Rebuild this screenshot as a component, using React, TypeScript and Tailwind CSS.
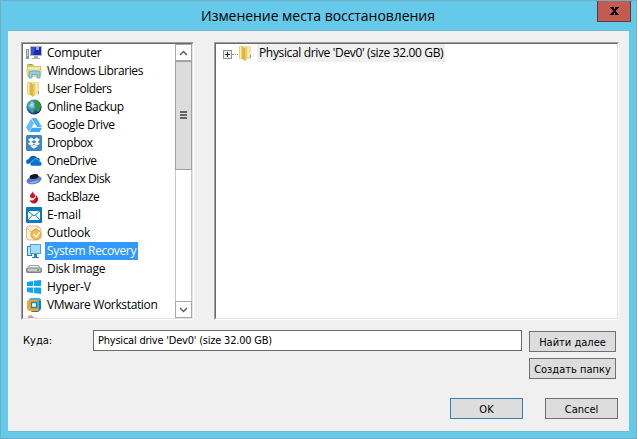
import React from 'react';

const FolderIcon = () => (
  <svg width="16" height="16" viewBox="0 0 16 16">
    <path d="M1 1h5v13H2l-1-1z" fill="#ecd277" />
    <path d="M6 1h7v12l-5 2H6z" fill="#f6e294" />
    <path d="M4 2l3 1v13l-3-2z" fill="#dcb748" />
    <path d="M7 3l2-1v12l-2 2z" fill="#e9cb66" />
    <path d="M2 2h1v11H2zM10 2h1v10h-1z" fill="#fbf0bd" />
    <path d="M12 10h1v3h-1z" fill="#59a9dc" />
  </svg>
);

const ComputerIcon = () => (
  <svg width="16" height="16" viewBox="0 0 16 16">
    <path d="M0 4h3v10H0z" fill="#8c9299" />
    <path d="M1 5h1v6H1z" fill="#d2d6da" />
    <path d="M1 11h1v2H1z" fill="#36d04c" />
    <path d="M4 1h12v10H4z" fill="#b8b9bd" />
    <path d="M5 2h10v8H5z" fill="#1b27b5" />
    <path d="M5 2h5l-3 8H5z" fill="#3d51d4" />
    <path d="M10 2h3v3h-3z" fill="#8fa4ef" />
    <path d="M8 11h4v2h2v1H6v-1h2z" fill="#aaaeb3" />
  </svg>
);

const LibraryIcon = () => (
  <svg width="16" height="16" viewBox="0 0 16 16">
    <path d="M1 1h6l1 2h7v11H1z" fill="#dfbf60" />
    <path d="M2 4h12v9H2z" fill="#f7e7a5" />
    <path d="M3 1h3v1H3z" fill="#57bd49" />
    <path d="M0 7h16l-1 7H1z" fill="#f1d77e" />
    <path d="M3 15V9.500Q3 8 5 8h7q2 0 2 1.500V15h-3v-3.500H6V15z" fill="#8bd0ee" stroke="#3f91b9" strokeWidth=".6" />
  </svg>
);

const GlobeIcon = () => (
  <svg width="16" height="16" viewBox="0 0 16 16">
    <defs>
      <radialGradient id="sea" cx=".35" cy=".35" r=".7">
        <stop offset="0" stopColor="#c3e8fa" />
        <stop offset=".5" stopColor="#2c80cf" />
        <stop offset="1" stopColor="#0c246b" />
      </radialGradient>
    </defs>
    <circle cx="8" cy="8" r="7.600" fill="url(#sea)" />
    <path d="M9 1l4 2 2 4-1 4-2 2-2-2V8L8 7l1-3-2-1z" fill="#2f9a35" />
    <path d="M1.500 4 4 2l1 2-3 3zM4 10l4 1-1 3-2-1z" fill="#4bad3b" />
  </svg>
);

const DriveIcon = () => (
  <svg width="16" height="16" viewBox="0 0 16 16">
    <path d="M5.300 1h5.200L16 10h-5z" fill="#4cb3fa" />
    <path d="M5 1.700 8 6.500 3 15 0 10.500z" fill="#61bdfb" />
    <path d="M6 10.800h10L13.500 15H3.500z" fill="#3ba8f5" />
  </svg>
);

const DropboxIcon = () => (
  <svg width="16" height="16" viewBox="0 0 16 16">
    <rect width="16" height="16" rx="1.500" fill="#3f86c5" />
    <path d="M5.300 2.500 8 4.600l2.700-2.100L14 4.800l-2.300 2 2.300 2-3.200 2L8 8.700l-2.800 2.100-3.200-2 2.300-2-2.300-2z" fill="#fff" />
    <path d="M8 5.200 10.600 6.800 8 8.400 5.400 6.800z" fill="#3f86c5" />
    <path d="M4.500 11.300 8 9.700l3.500 1.600L8 13.700z" fill="#fff" />
  </svg>
);

const OneDriveIcon = () => (
  <svg width="16" height="16" viewBox="0 0 16 16">
    <path d="M1 11c-2-3 0-5 2-5 1-4 7-4 8-1 2-1 3 1 3 3z" fill="#0863b9" />
    <path d="M5 13c-2-3 0-5 2-5 1-3 5-3 6 0 3 0 4 5 1 5z" fill="#0873d0" stroke="#fff" strokeWidth=".4" />
  </svg>
);

const YandexIcon = () => (
  <svg width="16" height="16" viewBox="0 0 16 16">
    <ellipse cx="8" cy="9" rx="7.600" ry="4" transform="rotate(-14 8 9)" fill="#5a7bc8" />
    <ellipse cx="8" cy="5.500" rx="4.500" ry="2.400" transform="rotate(-10 8 5.500)" fill="#151719" />
    <path d="M2 10.500q6 2 11.500-2.500-3 4.500-8 4.500z" fill="#9db5ea" />
  </svg>
);

const FlameIcon = () => (
  <svg width="16" height="16" viewBox="0 0 16 16">
    <path d="M7 2c0 3 3 3 2 6-1 2-5 2-5-1 0-2 2-2 3-5z" fill="#d2142c" />
    <path d="M10 6c2 2 3 5 1 7-3 3-7 1-7-2 2 1 5 1 6-5z" fill="#c71028" />
    <path d="M5 9q3 2 5-1" stroke="#fff" strokeWidth=".5" fill="none" />
  </svg>
);

const MailIcon = () => (
  <svg width="16" height="16" viewBox="0 0 16 16">
    <rect width="16" height="16" rx="1" fill="#0879bd" />
    <path d="M2 4h12v9H2z" fill="#fff" />
    <path d="M2 4l6 5 6-5M2 13l4.500-5M14 13 9.500 8" stroke="#1986c1" strokeWidth="1" fill="none" />
  </svg>
);

const OutlookIcon = () => (
  <svg width="16" height="16" viewBox="0 0 16 16">
    <path d="M.5 3 2 1h10l3 3v9l-3 2H2L.5 13z" fill="#fbeed8" stroke="#dda778" strokeWidth=".8" />
    <path d="M1 3l4 4 8-5" fill="none" stroke="#e0af86" strokeWidth=".8" />
    <circle cx="10" cy="9.500" r="5" fill="#f3b942" stroke="#cd9c50" strokeWidth=".8" />
    <path d="M7.500 9l2.500 3 3.500-4.500" fill="none" stroke="#fffbe8" strokeWidth="1.700" />
  </svg>
);

const RecoveryIcon = () => (
  <svg width="16" height="16" viewBox="0 0 16 16" shapeRendering="crispEdges">
    <path d="M1.500 3.500h4v9h-4z" fill="#c5e7f7" stroke="#2683b5" />
    <path d="M4.500 1.500h10v9h-10z" fill="#a3dcf6" stroke="#4ba3cd" />
    <path d="M8 11h3v3h2v1H6v-1h2z" fill="#2586b8" />
  </svg>
);

const DiskIcon = () => (
  <svg width="16" height="16" viewBox="0 0 16 16">
    <path d="M1 8 3 4h10l2 4z" fill="#a2a4a6" />
    <path d="M2 7l2-2h8l2 2z" fill="#eeeeef" />
    <rect y="6.500" width="16" height="5.500" rx="2" fill="#7d8184" />
    <path d="M1.500 7.500h13v3h-13z" fill="#c7cacc" />
    <path d="M11 8h2v2h-2z" fill="#43d342" />
  </svg>
);

const WindowsIcon = () => (
  <svg width="16" height="16" viewBox="0 0 16 16">
    <path d="M1 3l6-1v5H1zM8 1.800 15 1v6H8zM1 8.500h6V14l-6-1zM8 8.500h7V15l-7-1z" fill="#08a7f1" />
  </svg>
);

const VmwareIcon = () => (
  <svg width="16" height="16" viewBox="0 0 16 16">
    <rect x="3" y="1" width="12" height="12" rx="2" fill="#50b0cf" />
    <path d="M15 4v8l-3 3H6l-2-2h9V3z" fill="#247f9f" />
    <path d="M1 5q0-2 2-2h8v3H5v5h7v3H4q-3 0-3-3z" fill="#f0a52c" />
    <path d="M5.500 5.500h5v5h-5z" fill="#fff" stroke="#2283ad" strokeWidth="1.300" />
  </svg>
);

const items = [
  { name: 'Computer', icon: <ComputerIcon />, fit: 'tracking-[-0.25px]' },
  { name: 'Windows Libraries', icon: <LibraryIcon />, fit: 'tracking-[-0.4px]' },
  { name: 'User Folders', icon: <FolderIcon />, fit: 'tracking-[-0.5px]' },
  { name: 'Online Backup', icon: <GlobeIcon />, fit: 'tracking-[-0.33px]' },
  { name: 'Google Drive', icon: <DriveIcon />, fit: 'tracking-[-0.35px]' },
  { name: 'Dropbox', icon: <DropboxIcon />, fit: 'tracking-[-0.5px]' },
  { name: 'OneDrive', icon: <OneDriveIcon />, fit: 'tracking-[-0.4px]' },
  { name: 'Yandex Disk', icon: <YandexIcon />, fit: 'tracking-[-0.45px]' },
  { name: 'BackBlaze', icon: <FlameIcon />, fit: 'tracking-[-0.45px]' },
  { name: 'E-mail', icon: <MailIcon />, fit: 'tracking-[-0.05px]' },
  { name: 'Outlook', icon: <OutlookIcon />, fit: 'tracking-[-0.25px]' },
  { name: 'System Recovery', icon: <RecoveryIcon />, fit: 'tracking-[-0.35px]', selected: true },
  { name: 'Disk Image', icon: <DiskIcon />, fit: 'tracking-[-0.32px]' },
  { name: 'Hyper-V', icon: <WindowsIcon />, fit: 'tracking-[-0.15px]' },
  { name: 'VMware Workstation', icon: <VmwareIcon />, fit: 'tracking-[-0.35px]' },
];

function Panel({ className, children }: { className: string; children: React.ReactNode }) {
  return (
    <div className={`border border-t-[#a0a0a0] border-l-[#a0a0a0] border-r-white border-b-white ${className}`}>
      <div className="flex h-full w-full border border-t-[#696969] border-l-[#696969] border-r-[#e3e3e3] border-b-[#e3e3e3] bg-white">
        {children}
      </div>
    </div>
  );
}

function Button({ className, children }: { className: string; children: React.ReactNode }) {
  return (
    <button className={`flex h-[21px] items-center justify-center border bg-[#ddd] pt-px leading-none whitespace-nowrap ${className}`}>
      {children}
    </button>
  );
}

export default function App() {
  return (
    <div className="flex h-[439px] w-[637px] flex-col overflow-hidden border border-[#74abc9] bg-[#65c9e9] text-black">
      <header className="-mt-px flex h-[30px] shrink-0 items-start pr-[5px]">
        <h1 className="w-full pl-[38px] pt-[6px] text-center font-['Open_Sans',sans-serif] text-[14px] leading-5 tracking-[-0.05px] whitespace-nowrap">
          Изменение места восстановления
        </h1>
        <button className="flex h-[22px] w-[34px] shrink-0 items-center justify-center border border-[#5c3a38] border-t-[#74abc9] bg-[#c35b50]">
          <svg width="9" height="8" viewBox="0 0 9 8" shapeRendering="crispEdges">
            <path d="M0 0h4v1H0zM5 0h4v1H5zM1 1h3v1H1zM5 1h3v1H5zM2 2h5v1H2zM3 3h3v2H3zM2 5h5v1H2zM1 6h3v1H1zM5 6h3v1H5zM0 7h4v1H0zM5 7h4v1H5z" fill="#000" />
          </svg>
        </button>
      </header>

      <main className="mx-[7px] h-[402px] shrink-0 border-y border-[#78b4cf] bg-[#f0f0f0] font-['DejaVu_Sans_Condensed','DejaVu_Sans',sans-serif] text-[11px]">
        <div className="flex gap-[20px] pt-[11px] pl-[13px]">
          <Panel className="h-[278px] w-[173px] shrink-0">
            <ul className="h-full flex-1 overflow-hidden font-['Open_Sans',sans-serif] text-[12px]">
              {items.map((item) => (
                <li key={item.name} className="flex h-[18px] items-center pl-[3px]">
                  <span className="h-4 w-4 shrink-0">{item.icon}</span>
                  <span className={`ml-[3px] h-[18px] px-[2px] leading-[18px] whitespace-nowrap ${item.fit} ${item.selected ? 'bg-[#3399ff] text-white' : ''}`}>
                    {item.name}
                  </span>
                </li>
              ))}
              <li className="h-[4px] overflow-hidden pl-[3px]">
                <svg width="16" height="16" viewBox="0 0 16 16">
                  <path d="M2 2l3-1 3 2v2H2z" fill="#e59a8f" />
                  <path d="M7 3h4v3H7z" fill="#d8d8d8" />
                </svg>
              </li>
            </ul>
            <div className="flex w-[17px] shrink-0 flex-col bg-white">
              <div className="flex h-[17px] items-center justify-center border border-[#a8a8a8]">
                <svg width="9" height="6" viewBox="0 0 9 6"><path d="M1 5l3.500-3.500L8 5" fill="none" stroke="#606060" strokeWidth="1.500" /></svg>
              </div>
              <div className="flex h-[109px] items-center justify-center border border-[#a0a0a0] bg-[#dcdcdc]">
                <div className="flex -translate-y-px flex-col gap-px">
                  <i className="h-[2px] w-[7px] bg-[#666]" />
                  <i className="h-[2px] w-[7px] bg-[#666]" />
                  <i className="h-[2px] w-[7px] bg-[#666]" />
                </div>
              </div>
              <div className="flex-1 border-x border-[#c8c8c8]" />
              <div className="flex h-[17px] items-center justify-center border border-[#a8a8a8]">
                <svg width="9" height="6" viewBox="0 0 9 6"><path d="M1 1l3.500 3.500L8 1" fill="none" stroke="#606060" strokeWidth="1.500" /></svg>
              </div>
            </div>
          </Panel>

          <Panel className="h-[278px] w-[405px] shrink-0">
            <div className="flex h-[18px] items-center pl-[7px] font-['Open_Sans',sans-serif] text-[12px]">
              <span className="mt-[3px] flex h-[9px] w-[9px] items-center justify-center border border-[#919191] bg-[#eee]">
                <svg width="5" height="5" viewBox="0 0 5 5" shapeRendering="crispEdges"><path d="M2 0h1v5H2zM0 2h5v1H0z" fill="#222" /></svg>
              </span>
              <span className="mt-[3px] w-[6px] border-t border-dotted border-[#888]" />
              <FolderIcon />
              <span className="ml-[3px] h-[18px] bg-[#f0f0f0] px-[2px] leading-[18px] tracking-[-0.35px] whitespace-nowrap">
                Physical drive 'Dev0' (size 32.00 GB)
              </span>
            </div>
          </Panel>
        </div>

        <div className="flex pt-[10px] pl-[15px]">
          <label className="w-[70px] leading-[21px]">Куда:</label>
          <div className="h-[21px] w-[429px] border border-[#6d6d6d] bg-white pl-[4px] leading-[19px] tracking-[-0.22px]">
            Physical drive 'Dev0' (size 32.00 GB)
          </div>
          <div className="ml-[7px] flex flex-col gap-[6px] pt-px">
            <Button className="w-[87px] border-[#707070]">Найти далее</Button>
            <Button className="w-[87px] border-[#707070]">Создать папку</Button>
          </div>
        </div>

        <div className="flex gap-[22px] pt-[19px] pl-[442px]">
          <Button className="w-[73px] border-[#3c7fb1]">OK</Button>
          <Button className="w-[73px] border-[#707070]">Cancel</Button>
        </div>
      </main>
    </div>
  );
}
